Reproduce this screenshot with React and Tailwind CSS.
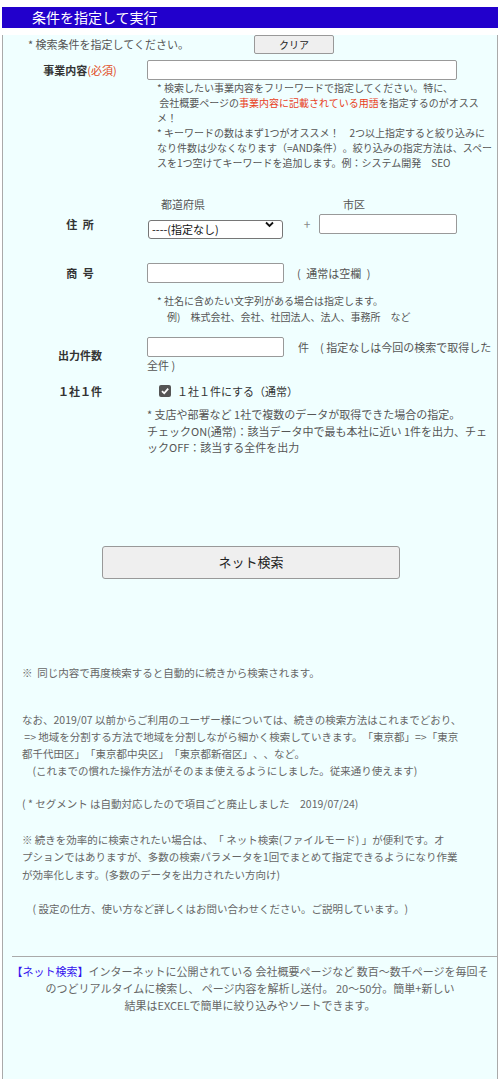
export default function App() {
  const nb = "\u00a0";
  return (
    <div className="min-h-[1079px] bg-white pt-[7px] pl-[2px] font-['Noto_Sans_CJK_JP','Liberation_Sans',sans-serif] text-[#555] [text-spacing-trim:space-all]">
      <div className="w-[496px]">
        <div className="h-[21px] bg-[#2200cc] pl-[30px] text-[14px] leading-[21px] text-white">
          条件を指定して実行
        </div>
        <div className="h-[1048px] border-x border-b border-[#aaa] bg-[#f0ffff]">
          {/* row 1 */}
          <div className="mt-[7px] flex items-center pl-[25px]">
            <div className="w-[226px] text-[11px] leading-[19px] whitespace-nowrap">* 検索条件を指定してください。</div>
            <button className="h-[19px] w-[80px] rounded-[2px] border border-[#999] bg-[#efefef] text-[10px] leading-[17px] text-[#222]">
              クリア
            </button>
          </div>

          <div className="pl-[10px]">
            {/* 事業内容 */}
            <div className="mt-[6px] flex">
              <div className="w-[134px] text-center text-[11px] leading-[20px] font-bold text-[#333]">
                事業内容<span className="font-normal text-[#e04a1a]">(必須)</span>
              </div>
              <input className="h-[20px] w-[310px] rounded-[2px] border border-[#999] bg-white" />
            </div>
            <div className="ml-[144px] text-[10px] leading-[15px] whitespace-nowrap">
              <div>* 検索したい事業内容をフリーワードで指定してください。特に、</div>
              <div>
                {nb}会社概要ページの<span className="text-[#e8401c]">事業内容に記載されている用語</span>を指定するのがオスス
              </div>
              <div>メ！</div>
              <div>* キーワードの数はまず1つがオススメ！　2つ以上指定すると絞り込みに</div>
              <div>なり件数は少なくなります（=AND条件）。絞り込みの指定方法は、スペー</div>
              <div>スを1つ空けてキーワードを追加します。例：システム開発　SEO</div>
            </div>

            {/* 住所 */}
            <div className="mt-[27px] flex h-[15px] text-[11px] leading-[15px] whitespace-nowrap">
              <span className="ml-[148px]">都道府県</span>
              <span className="ml-[138px]">市区</span>
            </div>
            <div className="mt-[2px] flex items-center">
              <div className="w-[134px] text-center text-[11px] font-bold text-[#333]">住{"\u2002"}所</div>
              <div className="relative ml-[1px] h-[19px] w-[135px]">
                <select className="h-[19px] w-[135px] appearance-none rounded-[3px] border border-[#767676] bg-white pl-[3px] text-[11px] leading-[17px] text-[#111]">
                  <option>----(指定なし)</option>
                </select>
                <svg className="pointer-events-none absolute right-[9px] top-[6px]" width="9" height="7" viewBox="0 0 9 7">
                  <path d="M1 1.5 L4.5 5 L8 1.5" fill="none" stroke="#111" strokeWidth="1.8" />
                </svg>
              </div>
              <span className="w-[36px] pl-[12px] text-center text-[12px] text-[#888]">+</span>
              <input className="h-[20px] w-[138px] rounded-[2px] border border-[#999] bg-white" />
            </div>

            {/* 商号 */}
            <div className="mt-[29px] flex items-center">
              <div className="w-[134px] text-center text-[11px] font-bold text-[#333]">商{"\u2002"}号</div>
              <input className="h-[20px] w-[137px] rounded-[2px] border border-[#999] bg-white" />
              <span className="ml-[13px] text-[11px] whitespace-nowrap">({"\u2002"}通常は空欄{"\u2002"})</span>
            </div>
            <div className="mt-[10px] ml-[144px] text-[10px] leading-[16px] whitespace-nowrap">
              <div>* 社名に含めたい文字列がある場合は指定します。</div>
              <div>　例)　株式会社、会社、社団法人、法人、事務所　など</div>
            </div>

            {/* 出力件数 */}
            <div className="mt-[12px] flex">
              <div className="flex w-[134px] items-center justify-center text-[11px] font-bold text-[#333]">出力件数</div>
              <div>
                <div className="flex items-center">
                  <input className="h-[20px] w-[137px] rounded-[2px] border border-[#999] bg-white" />
                  <span className="ml-[14px] text-[11px] whitespace-nowrap">件　( 指定なしは今回の検索で取得した</span>
                </div>
                <div className="text-[11px] leading-[16px]">全件 )</div>
              </div>
            </div>

            {/* 1社1件 */}
            <div className="mt-[9px] flex h-[18px] items-center">
              <div className="w-[134px] text-center text-[11px] font-bold text-[#333]">１社１件</div>
              <span className="ml-[12px] flex h-[12px] w-[12px] items-center justify-center rounded-[2px] bg-[#555]">
                <svg width="10" height="10" viewBox="0 0 10 10">
                  <path d="M2 5.2 L4.2 7.3 L8.2 2.6" fill="none" stroke="#fff" strokeWidth="1.8" />
                </svg>
              </span>
              <span className="ml-[6px] text-[11px] text-[#333] whitespace-nowrap">１社１件にする（通常）</span>
            </div>
            <div className="mt-[6px] ml-[134px] text-[11px] leading-[16.5px] whitespace-nowrap">
              <div>* 支店や部署など 1社で複数のデータが取得できた場合の指定。</div>
              <div>チェックON(通常)：該当データ中で最も本社に近い 1件を出力、チェ</div>
              <div>ックOFF：該当する全件を出力</div>
            </div>
          </div>

          {/* search button */}
          <button className="mt-[90px] ml-[99px] h-[33px] w-[298px] rounded-[3px] border border-[#999] bg-[#efefef] text-[13px] text-[#222]">
            ネット検索
          </button>

          {/* notes */}
          <div className="pl-[19px] text-[10.5px] whitespace-nowrap text-[#666]">
            <div className="mt-[85px] leading-[17px]">※{nb}{nb}同じ内容で再度検索すると自動的に続きから検索されます。</div>
            <div className="mt-[30px] leading-[17px]">
              <div>なお、2019/07 以前からご利用のユーザー様については、続きの検索方法はこれまでどおり、</div>
              <div>{nb}=&gt; 地域を分割する方法で地域を分割しながら細かく検索していきます。「東京都」=&gt;「東京</div>
              <div>都千代田区」「東京都中央区」「東京都新宿区」、、など。</div>
              <div>　(これまでの慣れた操作方法がそのまま使えるようにしました。従来通り使えます)</div>
            </div>
            <div className="mt-[16px] leading-[17px]">( * セグメント は自動対応したので項目ごと廃止しました　2019/07/24)</div>
            <div className="mt-[19px] leading-[17.5px]">
              <div>※ 続きを効率的に検索されたい場合は、「 ネット検索(ファイルモード) 」が便利です。オ</div>
              <div>プションではありますが、多数の検索パラメータを1回でまとめて指定できるようになり作業</div>
              <div>が効率化します。(多数のデータを出力されたい方向け)</div>
            </div>
            <div className="mt-[17px] leading-[17px]">　( 設定の仕方、使い方など詳しくはお問い合わせください。ご説明しています。)</div>
          </div>

          {/* footer */}
          <div className="mt-[39px] ml-[9px] border-t border-[#aaa]" />
          <div className="mt-[6px] text-center text-[11px] leading-[17px] whitespace-nowrap text-[#666]">
            <div>
              <span className="text-[#3311ee]">【ネット検索】</span>インターネットに公開されている 会社概要ページなど 数百～数千ページを毎回そ
            </div>
            <div>のつどリアルタイムに検索し、 ページ内容を解析し送付。 20～50分。簡単+新しい</div>
            <div>結果はEXCELで簡単に絞り込みやソートできます。</div>
          </div>
        </div>
      </div>
    </div>
  );
}
